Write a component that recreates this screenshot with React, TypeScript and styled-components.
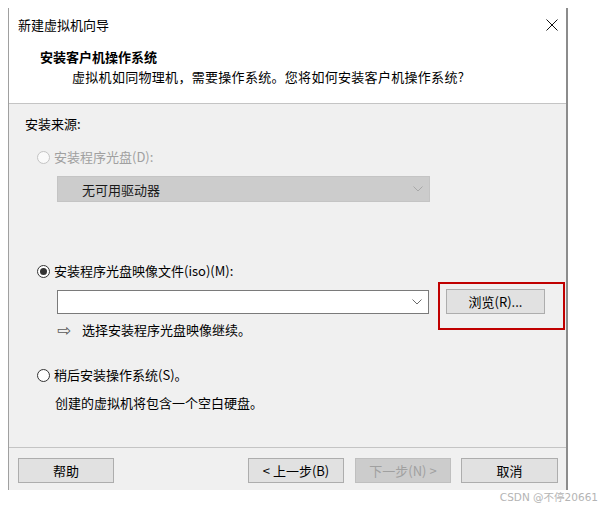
import styled, { createGlobalStyle } from 'styled-components';

const Global = createGlobalStyle`
  body {
    margin: 0;
    background: #ffffff;
    font-family: "Noto Sans CJK SC", "Noto Sans", sans-serif;
    font-size: 13px;
    color: #000000;
  }
`;

const Page = styled.div`
  width: 610px;
  height: 507px;
  padding: 8px 0 0 8px;
  box-sizing: border-box;
`;

const Dialog = styled.div`
  width: 560px;
  height: 482px;
  box-sizing: border-box;
  border-left: 1px solid #a0a0a0;
  border-right: 2px solid #8c8c8c;
  display: flex;
  flex-direction: column;
`;

const Header = styled.header`
  height: 96px;
  background: #ffffff;
  border-bottom: 1px solid #c4c4c4;
  box-sizing: border-box;
  padding: 7px 0 0 9px;
`;

const TitleRow = styled.div`
  display: flex;
  align-items: center;
  justify-content: space-between;
  height: 20px;
  line-height: 20px;
  padding-right: 8px;
`;

const Heading = styled.h1`
  margin: 12px 0 0 22px;
  font-size: 13px;
  font-weight: 700;
  line-height: 20px;
`;

const Subtitle = styled.p`
  margin: 0 0 0 54px;
  line-height: 20px;
  letter-spacing: 0.3px;
`;

const Body = styled.main`
  flex: 1;
  background: #f0f0f0;
  padding: 10px 0 0 16px;
  display: flex;
  flex-direction: column;
`;

const Line = styled.div<{ $top?: number; $indent?: number; $muted?: boolean }>`
  margin-top: ${p => p.$top ?? 0}px;
  margin-left: ${p => p.$indent ?? 0}px;
  line-height: 20px;
  height: 20px;
  display: flex;
  align-items: center;
  color: ${p => (p.$muted ? '#a0a0a0' : '#000000')};
`;

const Radio = styled.span<{ $checked?: boolean; $disabled?: boolean }>`
  width: 13px;
  height: 13px;
  box-sizing: border-box;
  border-radius: 50%;
  border: 1px solid ${p => (p.$disabled ? '#c4c4c4' : '#333333')};
  background: ${p => (p.$disabled ? '#fafafa' : '#ffffff')};
  margin: 0 4px 0 12px;
  display: flex;
  align-items: center;
  justify-content: center;
  &::after {
    content: '';
    width: 7px;
    height: 7px;
    border-radius: 50%;
    background: #333333;
    display: ${p => (p.$checked ? 'block' : 'none')};
  }
`;

const Combo = styled.div<{ $disabled?: boolean; $height: number; $width: number }>`
  width: ${p => p.$width}px;
  height: ${p => p.$height}px;
  box-sizing: border-box;
  background: ${p => (p.$disabled ? '#cccccc' : '#ffffff')};
  border: 1px solid ${p => (p.$disabled ? '#c4c4c4' : '#7a7a7a')};
  display: flex;
  align-items: center;
  justify-content: space-between;
  padding: 0 6px 0 24px;
  color: #1a1a1a;
`;

const ComboRow = styled.div<{ $top: number }>`
  margin: ${p => p.$top}px 0 0 32px;
  display: flex;
  align-items: center;
  gap: 17px;
`;

const BrowseWrap = styled.div`
  position: relative;
  &::after {
    content: '';
    position: absolute;
    left: -8px;
    top: -7px;
    right: -20px;
    bottom: -16px;
    border: 2px solid #c00000;
  }
`;

const Button = styled.button<{ $disabled?: boolean; $width?: number }>`
  width: ${p => p.$width ?? 96}px;
  height: 25px;
  box-sizing: border-box;
  background: ${p => (p.$disabled ? '#cccccc' : '#e1e1e1')};
  border: 1px solid ${p => (p.$disabled ? '#bfbfbf' : '#adadad')};
  color: ${p => (p.$disabled ? '#a0a0a0' : '#000000')};
  font-family: inherit;
  font-size: 13px;
  padding: 0;
  line-height: 23px;
`;

const Hint = styled.div`
  margin: 6px 0 0 32px;
  height: 20px;
  line-height: 20px;
  display: flex;
  align-items: center;
`;

const Arrow = styled.span`
  width: 25px;
  color: #5a5a5a;
  font-family: "DejaVu Sans", sans-serif;
  font-size: 17px;
  line-height: 20px;
`;

const Footer = styled.footer`
  height: 43px;
  border-top: 1px solid #c4c4c4;
  background: #f0f0f0;
  box-sizing: border-box;
  padding: 10px 8px 0 9px;
  display: flex;
`;

const NavGroup = styled.div`
  margin-left: auto;
  display: flex;
  gap: 10px;
  & > :first-child {
    margin-right: 1px;
  }
`;

const Watermark = styled.div`
  width: 590px;
  text-align: right;
  font-family: "DejaVu Sans", "Noto Sans CJK SC", sans-serif;
  font-size: 10.5px;
  line-height: 14px;
  color: #b4b4b4;
`;

function Chevron({ color }: { color: string }) {
  return (
    <svg width="10" height="6" viewBox="0 0 10 6">
      <polyline points="0.5,0.5 5,5 9.5,0.5" fill="none" stroke={color} strokeWidth="1" />
    </svg>
  );
}

function CloseIcon() {
  return (
    <svg width="12" height="12" viewBox="0 0 12 12">
      <path d="M0.5 0.5 L11.5 11.5 M11.5 0.5 L0.5 11.5" stroke="#111" strokeWidth="1" />
    </svg>
  );
}

export default function App() {
  return (
    <Page>
      <Global />
      <Dialog>
        <Header>
          <TitleRow>
            <span>新建虚拟机向导</span>
            <CloseIcon />
          </TitleRow>
          <Heading>安装客户机操作系统</Heading>
          <Subtitle>虚拟机如同物理机，需要操作系统。您将如何安装客户机操作系统?</Subtitle>
        </Header>

        <Body>
          <Line>安装来源:</Line>

          <Line $top={13} $muted>
            <Radio $disabled />
            安装程序光盘(D):
          </Line>
          <ComboRow $top={9}>
            <Combo $disabled $width={373} $height={26}>
              无可用驱动器
              <Chevron color="#a8a8a8" />
            </Combo>
          </ComboRow>

          <Line $top={59}>
            <Radio $checked />
            安装程序光盘映像文件(iso)(M):
          </Line>
          <ComboRow $top={8}>
            <Combo $width={372} $height={24}>
              <span />
              <Chevron color="#6a6a6a" />
            </Combo>
            <BrowseWrap>
              <Button $width={99}>浏览(R)...</Button>
            </BrowseWrap>
          </ComboRow>
          <Hint>
            <Arrow>⇨</Arrow>
            选择安装程序光盘映像继续。
          </Hint>

          <Line $top={25}>
            <Radio />
            稍后安装操作系统(S)。
          </Line>
          <Line $top={8} $indent={30}>
            创建的虚拟机将包含一个空白硬盘。
          </Line>
        </Body>

        <Footer>
          <Button>帮助</Button>
          <NavGroup>
            <Button>&lt; 上一步(B)</Button>
            <Button $disabled>下一步(N) &gt;</Button>
            <Button $width={97}>取消</Button>
          </NavGroup>
        </Footer>
      </Dialog>
      <Watermark>CSDN @不停20661</Watermark>
    </Page>
  );
}
